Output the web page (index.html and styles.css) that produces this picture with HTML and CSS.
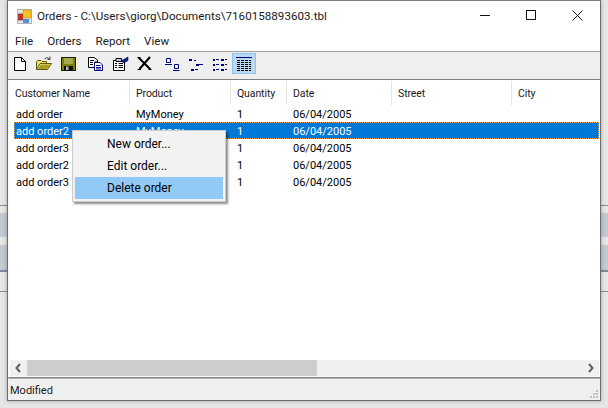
FILE: index.html
```html
<!DOCTYPE html>
<html lang="en">
<head>
<meta charset="utf-8">
<title>Orders</title>
<link rel="stylesheet" href="styles.css">
</head>
<body>
<div class="desktop">
  <div class="bg-lines">
    <div class="bl bl-a"></div><div class="bl bl-b"></div><div class="bl bl-c"></div><div class="bl bl-d"></div><div class="bl bl-e"></div>
  </div>
  <div class="window">
    <div class="titlebar">
      <svg class="appicon" width="15" height="15" viewBox="0 0 15 15"><rect x=".5" y=".5" width="14" height="14" fill="#e6e6e6" stroke="#b4b4b4"/><rect x="6" y="1" width="8" height="8" fill="#f5c21e" stroke="#c09a30" stroke-width=".7"/><rect x="1.500" y="5" width="4" height="6" fill="#d92a1c" stroke="#8f1d12" stroke-width=".7"/><rect x="6" y="10" width="6" height="4" fill="#4f8fe0"/></svg>
      <span class="title">Orders - C:\Users\giorg\Documents\7160158893603.tbl</span>
      <div class="wincontrols">
        <svg width="11" height="11" viewBox="0 0 11 11"><path d="M0 5.500H10" stroke="#111" fill="none"/></svg>
        <svg width="11" height="11" viewBox="0 0 11 11"><rect x=".5" y=".5" width="9" height="9" stroke="#111" fill="none"/></svg>
        <svg width="11" height="11" viewBox="0 0 11 11"><path d="M.5 .5L10.500 10.500M10.500 .5L.5 10.500" stroke="#111" fill="none"/></svg>
      </div>
    </div>
    <div class="menubar"><span>File</span><span>Orders</span><span>Report</span><span>View</span></div>
    <div class="toolbar">
      <svg class="ti first" width="16" height="16" viewBox="0 0 16 16"><path d="M2.500 1.500H9.500L13.500 5.500V14.500H2.500ZM9.500 1.500V5.500H13.500" fill="#fff" stroke="#000"/></svg>
      <svg class="ti" width="16" height="16" viewBox="0 0 16 16"><path d="M.5 13.500V5.500L1.500 4.500H5L6 5.500H10.500V7.500H4L.5 13.500H11.500L15.500 7.500H10.500" fill="#f4e06c" stroke="#5c5c00"/><path d="M4.500 8.500H14L11 13H2Z" fill="#a8a020"/><path d="M8.500 3Q10.500 .5 13.500 2.500M14 .5V3.500H11.500" fill="none" stroke="#444"/></svg>
      <svg class="ti" width="16" height="16" viewBox="0 0 16 16"><rect x="1.500" y="1.500" width="14" height="13" fill="#808000" stroke="#1c1c00"/><rect x="4" y="2" width="9" height="6" fill="#a8a850"/><rect x="4" y="10" width="9" height="4.500" fill="#111"/><rect x="6" y="10.500" width="2.500" height="3.500" fill="#bbb"/></svg>
      <svg class="ti gap" width="16" height="16" viewBox="0 0 16 16"><path d="M.5 1.500H6L9.500 4V6H6.500V11.500H.5Z" fill="#fff" stroke="#000"/><path d="M2 4.500H6M2 6.500H5M2 8.500H5" stroke="#000"/><path d="M6.500 6.500H12L14.500 9V14.500H6.500Z" fill="#fff" stroke="#000080"/><path d="M8 9.500H12.500M8 11.500H13M8 13H13" stroke="#000080"/></svg>
      <svg class="ti" width="17" height="16" viewBox="0 0 17 16"><path d="M1.500 4.500H12.500V14.500H1.500Z" fill="#fff" stroke="#000"/><path d="M4 2.500H9.500V5.500H4Z" fill="#ccc" stroke="#000"/><path d="M3 7.500H5M6.500 7.500H11M3 9.500H5M6.500 9.500H11M3 11.500H5M6.500 11.500H11" stroke="#000"/><path d="M9 5L16 1V4.500L12 7Z" fill="#14246e" stroke="#000080" stroke-width=".6"/></svg>
      <svg class="ti tix" width="16" height="16" viewBox="0 0 16 16"><path d="M2.500 1.500L14.500 13.500M14 1L3.500 13" stroke="#000" stroke-width="2" fill="none"/><path d="M1.500 1.500H4.500M12.500 13.500H15.500M1.500 13.500H5" stroke="#000" fill="none"/></svg>
      <svg class="ti gap" width="16" height="16" viewBox="0 0 16 16"><path d="M2.500 2.500H6.500V6.500H2.500ZM10.500 8.500H14.500V12.500H10.500Z" fill="none" stroke="#000080"/><path d="M1 8.500H8M9 14.500H15.500" stroke="#000080"/></svg>
      <svg class="ti" width="16" height="16" viewBox="0 0 16 16" fill="#000080"><rect x="1" y="3" width="3" height="2"/><rect x="6" y="4" width="2" height="1"/><rect x="8" y="8" width="3" height="2"/><rect x="11" y="8" width="4" height="1"/><rect x="3" y="13" width="3" height="2"/><rect x="7" y="13" width="3" height="1"/></svg>
      <svg class="ti" width="16" height="16" viewBox="0 0 16 16" fill="#000080"><rect x="1" y="3" width="2" height="2"/><rect x="4" y="3" width="3" height="1"/><rect x="9" y="3" width="3" height="2"/><rect x="13" y="3" width="2" height="1"/><rect x="1" y="8" width="2" height="2"/><rect x="4" y="8" width="3" height="1"/><rect x="9" y="8" width="3" height="2"/><rect x="13" y="8" width="2" height="1"/><rect x="1" y="13" width="2" height="2"/><rect x="4" y="13" width="3" height="1"/><rect x="9" y="13" width="3" height="2"/><rect x="13" y="13" width="2" height="1"/></svg>
      <div class="tactive"><svg width="16" height="14" viewBox="0 0 16 14"><path d="M0 .5H16" stroke="#000080"/><path d="M1 3.500H15M1 5.500H15M1 7.500H15M1 9.500H15M1 11.500H15M1 13.500H15" stroke="#000"/><path d="M4.500 3V14M8.500 3V14M12.500 3V14" stroke="#bcd9f2"/></svg></div>
    </div>
    <div class="listview">
      <div class="lhead">
        <div class="c c1">Customer Name</div><div class="c c2">Product</div><div class="c c3">Quantity</div><div class="c c4">Date</div><div class="c c5">Street</div><div class="c c6">City</div>
      </div>
      <div class="lbody">
        <div class="row"><div class="b1">add order</div><div class="b2">MyMoney</div><div class="b3">1</div><div class="b4">06/04/2005</div></div>
        <div class="row sel"><div class="b1">add order2</div><div class="b2">MyMoney</div><div class="b3">1</div><div class="b4">06/04/2005</div></div>
        <div class="row"><div class="b1">add order3</div><div class="b2"></div><div class="b3">1</div><div class="b4">06/04/2005</div></div>
        <div class="row"><div class="b1">add order2</div><div class="b2"></div><div class="b3">1</div><div class="b4">06/04/2005</div></div>
        <div class="row"><div class="b1">add order3</div><div class="b2"></div><div class="b3">1</div><div class="b4">06/04/2005</div></div>
      </div>
      <div class="hscroll">
        <svg class="arrow" width="17" height="16" viewBox="0 0 17 16"><path d="M10 4L6.500 8L10 12" stroke="#606060" stroke-width="2" fill="none"/></svg>
        <div class="track"><div class="thumb"></div></div>
        <svg class="arrow" width="17" height="16" viewBox="0 0 17 16"><path d="M7 4L10.500 8L7 12" stroke="#606060" stroke-width="2" fill="none"/></svg>
      </div>
    </div>
    <div class="status">
      <span>Modified</span>
      <svg class="grip" width="10" height="10" viewBox="0 0 10 10" fill="#bdbdbd"><rect x="7" y="0" width="2" height="2"/><rect x="4" y="3" width="2" height="2"/><rect x="7" y="3" width="2" height="2"/><rect x="1" y="6" width="2" height="2"/><rect x="4" y="6" width="2" height="2"/><rect x="7" y="6" width="2" height="2"/></svg>
    </div>
    <div class="ctxmenu">
      <div class="mi">New order...</div>
      <div class="mi">Edit order...</div>
      <div class="mi hot">Delete order</div>
    </div>
  </div>
</div>
</body>
</html>
```
FILE: styles.css
```css
* { box-sizing: border-box; }
html, body { margin: 0; padding: 0; }
body { width: 608px; height: 408px; overflow: hidden; font-family: Roboto, "Liberation Sans", sans-serif; font-size: 11px; color: #000; }
.desktop { position: relative; width: 608px; height: 408px; background: #e6e6e6; padding: 0 7px 7px 7px; }
.bg-lines { position: absolute; inset: 0; }
.bl { position: absolute; left: 0; right: 0; }
.bl-a { top: 205px; height: 1px; background: #8a8a8a; }
.bl-b { top: 213px; height: 24px; background: #c4cad2; }
.bl-c { top: 245px; height: 25px; background: #c4cad2; }
.bl-d { top: 270px; height: 2px; background: #8088a0; }
.bl-e { top: 291px; height: 1px; background: #8a8a8a; }
.window { position: relative; width: 594px; height: 401px; display: flex; flex-direction: column; background: #fff; border: 1px solid #6e6e6e; border-top-color: #7a7a7a; box-shadow: 0 0 4px rgba(0,0,0,.3); }
.titlebar { height: 30px; display: flex; align-items: center; padding-left: 9px; background: #fff; flex: none; }
.appicon { flex: none; margin-right: 5px; }
.title { font-size: 11.65px; color: #1a1a1a; }
.wincontrols { margin-left: auto; margin-bottom: 2px; display: flex; align-items: center; gap: 35px; padding-right: 17px; }
.menubar { height: 21px; flex: none; display: flex; align-items: center; gap: 14px; padding-left: 7px; background: #fff; border-bottom: 1px solid #a0a0a0; font-size: 11.6px; color: #1a1a1a; }
.toolbar { height: 28px; flex: none; display: flex; align-items: center; padding: 0 0 3px 4px; background: #efefef; border-bottom: 1px solid #808080; }
.ti { flex: none; margin-left: 8px; }
.ti.first { margin-left: 0; }
.ti.gap { margin-left: 12px; }
.ti.tix { margin-left: 7px; }
.tactive { width: 24px; height: 21px; flex: none; display: flex; align-items: center; justify-content: center; background: #bcd9f2; border: 1px solid #8fc3ee; margin-left: 4px; align-self: flex-start; margin-top: 1px; }
.listview { flex: 1; display: flex; flex-direction: column; background: #fff; min-height: 0; border-bottom: 1px solid #808080; border-left: 1px solid #f8f8f8; padding-right: 1px; }
.lhead { height: 24px; margin-top: 1px; flex: none; display: flex; color: #1a1a1a; font-size: 10.5px; letter-spacing: -.1px; }
.lhead .c { padding-left: 6px; padding-top: 6px; border-right: 1px solid #e4e4e4; }
.c1 { width: 121px; flex: none; }
.c2 { width: 101px; flex: none; }
.c3 { width: 56px; flex: none; }
.c4 { width: 105px; flex: none; }
.c5 { width: 120px; flex: none; }
.c6 { flex: 1; }
.lhead .c6 { border-right: 0; }
.lbody { flex: 1; min-height: 0; padding-left: 5px; }
.row { height: 17px; display: flex; align-items: center; padding-top: 2px; }
.row > div { flex: none; padding-left: 7px; white-space: nowrap; }
.row > .b1 { width: 115px; padding-left: 2px; }
.b2 { width: 101px; }
.b3 { width: 56px; }
.sel { background: #0078d7; color: #fff; outline: 1px dotted #f0a040; outline-offset: -1px; }
.hscroll { height: 16px; flex: none; display: flex; background: #f0f0f0; margin: 0 0 1px 1px; }
.arrow { flex: none; }
.track { flex: 1; min-width: 0; }
.thumb { width: 290px; height: 100%; background: #cdcdcd; }
.status { height: 22px; flex: none; display: flex; align-items: center; padding: 2px 0 0 2px; background: #f0f0f0; border-top: 1px solid #b4b4b4; color: #1a1a1a; position: relative; }
.grip { position: absolute; right: 1px; bottom: 0; }
.ctxmenu { position: absolute; left: 64px; top: 129px; width: 154px; height: 72px; padding: 2px; background: #f2f2f2; border: 1px solid #cccccc; box-shadow: 2px 2px 2px rgba(0,0,0,.45); }
.mi { height: 22px; padding-left: 32px; display: flex; align-items: center; font-size: 12px; }
.hot { background: #91c9f7; }
```
